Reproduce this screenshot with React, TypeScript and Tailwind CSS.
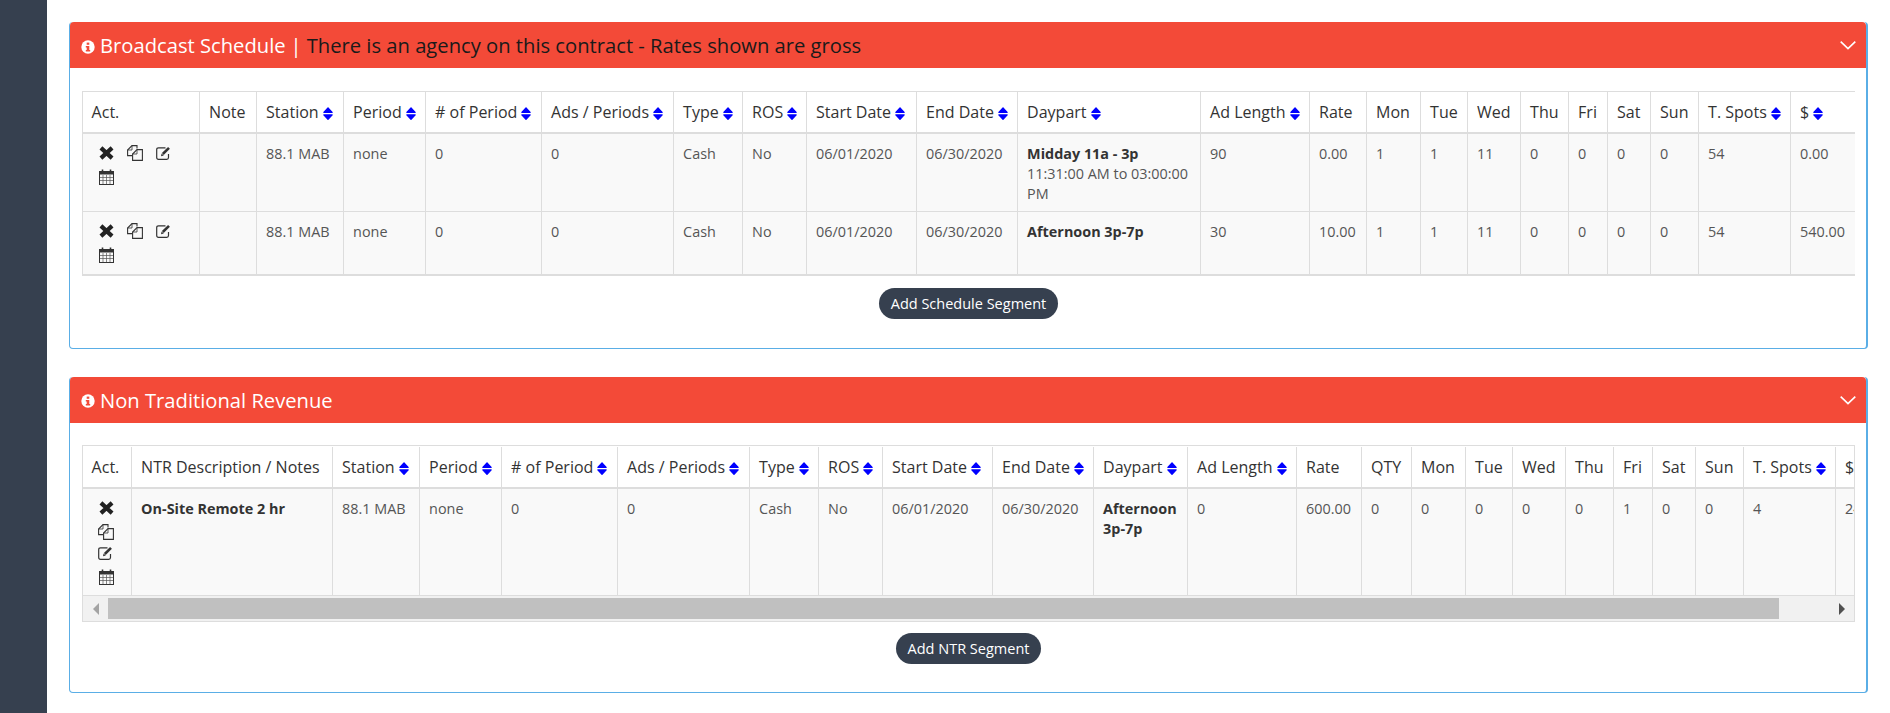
const Sort = () => (
  <svg viewBox="0 0 10 13" className="inline-block ml-[4px] w-[10px] h-[13px] align-[-2px]">
    <path d="M0.8 5.3 L5 0.8 L9.2 5.3 Z" fill="#0000ff" stroke="#0000ff" strokeLinejoin="round" strokeWidth="1.2" />
    <path d="M0.8 7.9 L5 12.4 L9.2 7.9 Z" fill="#0000ff" stroke="#0000ff" strokeLinejoin="round" strokeWidth="1.2" />
  </svg>
);

const RemoveIcon = () => (
  <svg viewBox="0 0 14 13" className="w-[15px] h-[14px]">
    <path d="M1.8 1.7 L12.2 11.3 M12.2 1.7 L1.8 11.3" stroke="#222" strokeWidth="3.9" />
  </svg>
);

const CopyIcon = () => (
  <svg viewBox="0 0 16 16" fill="none" stroke="#333" strokeWidth="1.1" className="w-[16px] h-[16px]">
    <path d="M10 3.5 V0.6 H5 L0.6 5 V10.6 H5" />
    <path d="M5 0.6 V5 H0.6" strokeWidth="0.8" />
    <path d="M10 4.6 H15.4 V15.4 H5.6 V9 Z" />
    <path d="M10 4.6 V9 H5.6" strokeWidth="0.8" />
  </svg>
);

const EditIcon = () => (
  <svg viewBox="0 0 16 14" fill="none" className="w-[16px] h-[14px]">
    <path d="M12.5 8 V11.5 Q12.5 13.3 10.7 13.3 H2.5 Q0.7 13.3 0.7 11.5 V3.6 Q0.7 1.8 2.5 1.8 H9.5" stroke="#333" strokeWidth="1.2" />
    <path d="M6.8 8 L13 1.8" stroke="#333" strokeWidth="2.6" />
    <path d="M5 10.3 L5.6 7.6 L7.8 9.6 Z" fill="#333" />
  </svg>
);

const CalendarIcon = () => (
  <svg viewBox="0 0 15 16" fill="none" className="w-[15px] h-[16px]">
    <rect x="0.5" y="2.5" width="14" height="13" stroke="#333" />
    <rect x="0.5" y="2.5" width="14" height="3" fill="#333" />
    <path d="M4 6 V15 M7.5 6 V15 M11 6 V15 M1 8.5 H14 M1 11.5 H14" stroke="#555" strokeWidth="0.7" />
    <path d="M3.5 0.5 V4 M11.5 0.5 V4" stroke="#333" strokeWidth="1.6" />
  </svg>
);

const InfoIcon = () => (
  <svg viewBox="0 0 14 14" className="w-[14px] h-[14px] mr-[5px] mt-[3px] shrink-0">
    <circle cx="7" cy="7" r="6.7" fill="#fff" />
    <rect x="5.7" y="2.6" width="2.6" height="2.2" fill="#f34a38" />
    <path d="M4.8 6 H8.3 V10 H9.2 V11.5 H4.8 V10 H5.7 V7.4 H4.8 Z" fill="#f34a38" />
  </svg>
);

const Chevron = () => (
  <svg viewBox="0 0 16 9" fill="none" className="w-[16px] h-[9px] mt-[1px]">
    <path d="M0.7 0.7 L8 7.7 L15.3 0.7" stroke="#fff" strokeWidth="1.6" />
  </svg>
);

const Actions = ({ stacked }: { stacked?: boolean }) => (
  <div className="flex flex-wrap -mt-[3px]">
    <span className="w-[29px] h-[24px] flex items-center justify-center"><RemoveIcon /></span>
    <span className="w-[29px] h-[24px] flex items-center justify-center"><CopyIcon /></span>
    <span className={`w-[29px] h-[24px] flex items-center justify-center ${stacked ? "-mt-[3px]" : ""}`}><EditIcon /></span>
    <span className="w-[29px] h-[24px] flex items-center justify-center"><CalendarIcon /></span>
  </div>
);

type Col = { label: string; w: string; sort?: boolean };

const scheduleCols: Col[] = [
  { label: "Act.", w: "w-[116px]" },
  { label: "Note", w: "w-[57px]" },
  { label: "Station", w: "w-[87px]", sort: true },
  { label: "Period", w: "w-[82px]", sort: true },
  { label: "# of Period", w: "w-[116px]", sort: true },
  { label: "Ads / Periods", w: "w-[132px]", sort: true },
  { label: "Type", w: "w-[69px]", sort: true },
  { label: "ROS", w: "w-[64px]", sort: true },
  { label: "Start Date", w: "w-[110px]", sort: true },
  { label: "End Date", w: "w-[101px]", sort: true },
  { label: "Daypart", w: "w-[183px]", sort: true },
  { label: "Ad Length", w: "w-[109px]", sort: true },
  { label: "Rate", w: "w-[57px]" },
  { label: "Mon", w: "w-[54px]" },
  { label: "Tue", w: "w-[47px]" },
  { label: "Wed", w: "w-[53px]" },
  { label: "Thu", w: "w-[48px]" },
  { label: "Fri", w: "w-[39px]" },
  { label: "Sat", w: "w-[43px]" },
  { label: "Sun", w: "w-[48px]" },
  { label: "T. Spots", w: "w-[92px]", sort: true },
  { label: "$", w: "w-[65px]", sort: true },
];

const ntrCols: Col[] = [
  { label: "Act.", w: "w-[48px]" },
  { label: "NTR Description / Notes", w: "w-[201px]" },
  { label: "Station", w: "w-[87px]", sort: true },
  { label: "Period", w: "w-[82px]", sort: true },
  { label: "# of Period", w: "w-[116px]", sort: true },
  { label: "Ads / Periods", w: "w-[132px]", sort: true },
  { label: "Type", w: "w-[69px]", sort: true },
  { label: "ROS", w: "w-[64px]", sort: true },
  { label: "Start Date", w: "w-[110px]", sort: true },
  { label: "End Date", w: "w-[101px]", sort: true },
  { label: "Daypart", w: "w-[94px]", sort: true },
  { label: "Ad Length", w: "w-[109px]", sort: true },
  { label: "Rate", w: "w-[65px]" },
  { label: "QTY", w: "w-[50px]" },
  { label: "Mon", w: "w-[54px]" },
  { label: "Tue", w: "w-[47px]" },
  { label: "Wed", w: "w-[53px]" },
  { label: "Thu", w: "w-[48px]" },
  { label: "Fri", w: "w-[39px]" },
  { label: "Sat", w: "w-[43px]" },
  { label: "Sun", w: "w-[48px]" },
  { label: "T. Spots", w: "w-[92px]", sort: true },
  { label: "$", w: "w-[90px]", sort: true },
];

const Head = ({ cols }: { cols: Col[] }) => (
  <>
    <colgroup>
      {cols.map((c) => (
        <col key={c.label} className={c.w} />
      ))}
    </colgroup>
    <thead>
      <tr className="h-[41px] bg-white">
        {cols.map((c) => (
          <th key={c.label} className="border-r last:border-r-0 border-b-2 border-[#ddd] px-[9.6px] first:pl-[8.6px] text-left align-middle font-normal text-[16px] text-[#333] whitespace-nowrap">
            {c.label}
            {c.sort && <Sort />}
          </th>
        ))}
      </tr>
    </thead>
  </>
);

const Td = ({ children, b }: { children?: React.ReactNode; b?: boolean }) => (
  <td className={`border-r last:border-r-0 border-b border-[#ddd] pt-[10px] px-[9.6px] first:pl-[8.6px] align-top text-[14.4px] leading-[20px] whitespace-normal ${b ? "font-bold text-[#333]" : "text-[#555]"}`}>
    {children}
  </td>
);

const ScheduleRow = ({ h, daypart, time, len, rate, total }: { h: string; daypart: string; time?: string; len: string; rate: string; total: string }) => (
  <tr className={`${h} bg-[#f9f9f9]`}>
    <Td><Actions /></Td>
    <Td />
    <Td>88.1 MAB</Td>
    <Td>none</Td>
    <Td>0</Td>
    <Td>0</Td>
    <Td>Cash</Td>
    <Td>No</Td>
    <Td>06/01/2020</Td>
    <Td>06/30/2020</Td>
    <Td>
      <span className="font-bold text-[#333]">{daypart}</span>
      {time && <div>{time}</div>}
    </Td>
    <Td>{len}</Td>
    <Td>{rate}</Td>
    <Td>1</Td>
    <Td>1</Td>
    <Td>11</Td>
    <Td>0</Td>
    <Td>0</Td>
    <Td>0</Td>
    <Td>0</Td>
    <Td>54</Td>
    <Td>{total}</Td>
  </tr>
);

const CardHeader = ({ children }: { children: React.ReactNode }) => (
  <div className="h-[46px] bg-[#f34a38] rounded-t-[4px] pl-[11px] pr-[10px] flex items-center justify-between">
    <div className="flex items-center text-[20.2px] text-white leading-[26px]">
      <InfoIcon />
      {children}
    </div>
    <Chevron />
  </div>
);

const AddButton = ({ label }: { label: string }) => (
  <button className="h-[31px] px-[12px] rounded-full bg-[#36404f] text-white text-[14.5px] leading-[31px]">{label}</button>
);

export default function App() {
  return (
    <div className="flex h-[713px] overflow-hidden bg-white font-['Open_Sans',sans-serif]">
      <aside className="w-[47px] shrink-0 bg-[#36404f]" />
      <main className="flex-1 min-w-0 flex flex-col px-[22px] pt-[22px]">
        <section className="border border-t-0 border-r-2 border-[#5aaee6] rounded-[4px] shrink-0">
          <CardHeader>
            Broadcast Schedule
            <span className="mx-[5px]">|</span>
            <span className="text-[#1a1a1a]">There is an agency on this contract - Rates shown are gross</span>
          </CardHeader>
          <div className="pl-[12px] pr-[11px] pt-[23px] pb-[29px] flex flex-col items-center">
            <div className="w-full border border-[#ddd]">
              <table className="table-fixed w-[1772px]">
                <Head cols={scheduleCols} />
                <tbody>
                  <ScheduleRow h="h-[78px]" daypart="Midday 11a - 3p" time="11:31:00 AM to 03:00:00 PM" len="90" rate="0.00" total="0.00" />
                  <ScheduleRow h="h-[63px]" daypart="Afternoon 3p-7p" len="30" rate="10.00" total="540.00" />
                </tbody>
              </table>
            </div>
            <div className="mt-[12px]"><AddButton label="Add Schedule Segment" /></div>
          </div>
        </section>

        <section className="mt-[28px] border border-t-0 border-r-2 border-[#5aaee6] rounded-[4px] shrink-0">
          <CardHeader>Non Traditional Revenue</CardHeader>
          <div className="pl-[12px] pr-[11px] pt-[22px] pb-[28px] flex flex-col items-center">
            <div className="w-full border border-[#ddd] overflow-hidden">
              <div className="border-t border-white">
                <table className="table-fixed w-[1842px]">
                  <Head cols={ntrCols} />
                  <tbody>
                    <tr className="h-[108px] bg-[#f9f9f9]">
                      <Td><Actions stacked /></Td>
                      <Td b>On-Site Remote 2 hr</Td>
                      <Td>88.1 MAB</Td>
                      <Td>none</Td>
                      <Td>0</Td>
                      <Td>0</Td>
                      <Td>Cash</Td>
                      <Td>No</Td>
                      <Td>06/01/2020</Td>
                      <Td>06/30/2020</Td>
                      <Td b>Afternoon 3p-7p</Td>
                      <Td>0</Td>
                      <Td>600.00</Td>
                      <Td>0</Td>
                      <Td>0</Td>
                      <Td>0</Td>
                      <Td>0</Td>
                      <Td>0</Td>
                      <Td>1</Td>
                      <Td>0</Td>
                      <Td>0</Td>
                      <Td>4</Td>
                      <Td>2400.00</Td>
                    </tr>
                  </tbody>
                </table>
              </div>
              <div className="h-[25px] bg-[#f1f1f1] flex items-center">
                <div className="w-[25px] shrink-0 flex justify-center">
                  <svg viewBox="0 0 6 12" className="w-[6px] h-[12px]"><path d="M6 0 L0 6 L6 12 Z" fill="#a3a3a3" /></svg>
                </div>
                <div className="w-[1671px] h-[21px] bg-[#c0c0c0] shrink-0" />
                <div className="flex-1 flex justify-end pr-[9px]">
                  <svg viewBox="0 0 6 12" className="w-[6px] h-[12px]"><path d="M0 0 L6 6 L0 12 Z" fill="#505050" /></svg>
                </div>
              </div>
            </div>
            <div className="mt-[11px]"><AddButton label="Add NTR Segment" /></div>
          </div>
        </section>

        <div className="mt-[20px] mr-[2px] self-end w-[30px] h-[30px] rounded-full bg-[#9aa5b1] shrink-0" />
      </main>
    </div>
  );
}
